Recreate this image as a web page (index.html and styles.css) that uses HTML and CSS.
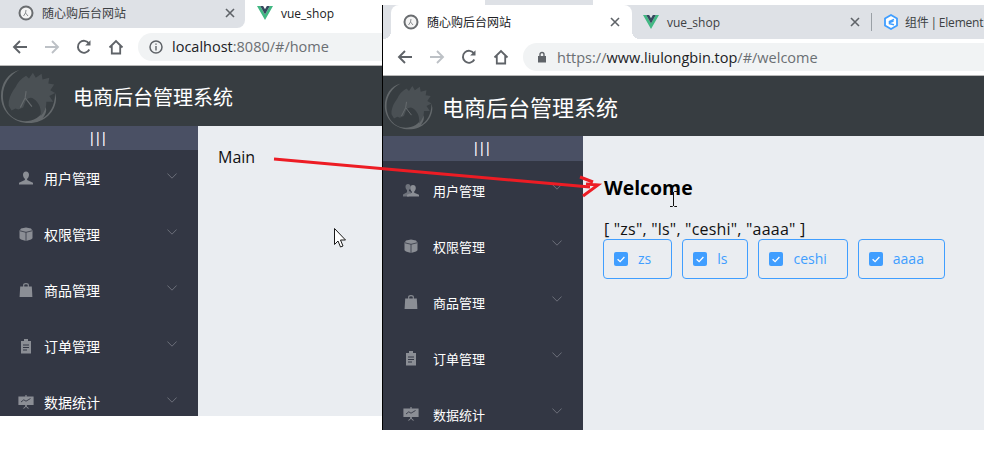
FILE: index.html
```html
<!DOCTYPE html>
<html lang="en">
<head>
    <meta charset="UTF-8">
    <meta name="viewport" content="width=device-width, initial-scale=1.0">
    <title>Welcome vs Home</title>
    <link rel="stylesheet" href="styles.css">
</head>
<body>
    <svg class="defs" width="0" height="0">
        <symbol id="i-horse" viewBox="0 0 60 60">
            <path fill="#63686b" d="M20 3C8 6 1 17 1 30c0 16 13 28 29 28 16 0 28-12 28-26l-1-5c0 14-6 22-13 26 3-4 5-8 3-12-4 11-13 15-21 15C12 56 3 44 3 30 3 18 10 8 20 3z"/>
            <path fill="#4a5054" d="M9 36c1-6 4-11 7-15 2-5 6-9 11-12l3 3 4-6 3 5 6-4 1 6 7-2-1 6 6 1-4 6 5 3-6 3 4 6-7 0c0 6-2 11-6 15 1-7-1-14-7-18-3-2-5-1-8 1l-3 8-5 2-3-1-4 2-3-5z"/>
            <path fill="none" stroke="#666b6e" stroke-width="1.200" d="M27 25l-1 7-5 10M26 32l7 9"/>
        </symbol>
        <symbol id="i-fav" viewBox="0 0 16 16">
            <circle cx="8" cy="8" r="6.5" fill="#f4f4f4" stroke="#6a6d70" stroke-width="2"/>
            <path fill="none" stroke="#8a8d90" stroke-width="1" d="M8 5l-.5 3-2 3M7.500 8l2.500 3"/>
        </symbol>
        <symbol id="i-vue" viewBox="0 0 24 21">
            <path fill="#41b883" d="M0 0l12 21L24 0h-4.800L12 12.600 4.800 0z"/>
            <path fill="#35495e" d="M4.800 0L12 12.600 19.200 0h-4.400L12 4.800 9.200 0z"/>
        </symbol>
        <symbol id="i-element" viewBox="0 0 16 16">
            <path fill="#fff" stroke="#409eff" stroke-width="1.800" d="M8 1l6 3.500v7L8 15l-6-3.500v-7z"/>
            <path fill="none" stroke="#409eff" stroke-width="1.600" d="M11 5.600L6.500 7.500v2.200l4.500 1M6.500 8.600l4-1.500"/>
        </symbol>
        <symbol id="i-x" viewBox="0 0 10 10">
            <path fill="none" stroke="#5f6368" stroke-width="1.600" d="M1 1l8 8M9 1l-8 8"/>
        </symbol>
        <symbol id="i-back" viewBox="0 0 16 16">
            <path fill="none" stroke="currentColor" stroke-width="1.900" d="M15 8H2M8 2L2 8l6 6"/>
        </symbol>
        <symbol id="i-forward" viewBox="0 0 16 16">
            <path fill="none" stroke="currentColor" stroke-width="1.900" d="M1 8h13M8 2l6 6-6 6"/>
        </symbol>
        <symbol id="i-reload" viewBox="0 0 16 16">
            <path fill="none" stroke="currentColor" stroke-width="1.900" d="M13.300 10.500A6 6 0 1 1 13 4.600"/>
            <path fill="currentColor" d="M14.500 1.200v5.300H9.200z"/>
        </symbol>
        <symbol id="i-home" viewBox="0 0 16 16">
            <path fill="none" stroke="currentColor" stroke-width="1.800" d="M1.500 8.500L8 2l6.500 6.500M3.800 7v7.500h8.400V7"/>
        </symbol>
        <symbol id="i-info" viewBox="0 0 14 14">
            <circle cx="7" cy="7" r="6" fill="none" stroke="#5f6368" stroke-width="1.500"/>
            <path fill="#5f6368" d="M6.300 3.400h1.400v1.400H6.300zM6.300 6h1.400v4.600H6.300z"/>
        </symbol>
        <symbol id="i-lock" viewBox="0 0 10 12">
            <path fill="#5f6368" d="M1 5h8v6.500H1z"/>
            <path fill="none" stroke="#5f6368" stroke-width="1.400" d="M3 5V3.500a2 2 0 0 1 4 0V5"/>
        </symbol>
        <symbol id="i-user" viewBox="0 0 16 16">
            <path fill="#8b8e95" d="M8 1.500c1.900 0 3 1.300 3 3.200 0 1.900-1 3.500-1.900 4.100v1.300l5.900 2.600V14.500H1v-1.800l5.900-2.600V8.800C6 8.200 5 6.600 5 4.700 5 2.800 6.100 1.500 8 1.500z"/>
        </symbol>
        <symbol id="i-users" viewBox="0 0 16 16">
            <path fill="#6f737c" d="M5 2c1.500 0 2.500 1.100 2.500 2.700 0 1.500-.8 2.700-1.500 3.200v1.200L8 10l-2 4.500H0v-2L4 10.300V8C3.200 7.400 2.500 6.200 2.500 4.700 2.500 3.100 3.500 2 5 2z"/>
            <path fill="#8b8e95" d="M10 3c1.700 0 2.800 1.200 2.800 3 0 1.600-.8 2.900-1.600 3.400v1.300l4.800 2.100v1.700H4v-1.700l4.800-2.100V9.400C8 8.900 7.200 7.600 7.200 6c0-1.800 1.100-3 2.800-3z"/>
        </symbol>
        <symbol id="i-box" viewBox="0 0 16 16">
            <path fill="#8b8e95" d="M8 1.500l5 1 1.500 2.200v7.600l-1.500 1.300-5 1.400-5-1.400-1.500-1.300V4.700L3 2.500z"/>
            <path fill="none" stroke="#333744" stroke-width=".8" d="M2 4.800l6 1.500 6-1.500M8 6.300V15"/>
        </symbol>
        <symbol id="i-bag" viewBox="0 0 16 16">
            <path fill="#8b8e95" d="M2.200 4.500h11.600l.6 10.500H1.600z"/>
            <path fill="none" stroke="#8b8e95" stroke-width="1.100" d="M5.700 5V3c0-.8.800-1.400 2.300-1.400s2.300.6 2.300 1.400v2"/>
        </symbol>
        <symbol id="i-clip" viewBox="0 0 16 16">
            <path fill="#8b8e95" d="M6 1h4v2h3v12.500H3V3h3z"/>
            <path fill="none" stroke="#333744" stroke-width="1" d="M5 7h6M5 9.500h6M5 12h4"/>
        </symbol>
        <symbol id="i-board" viewBox="0 0 16 16">
            <path fill="#8b8e95" d="M7.400 1h1.200v1.500h7v8.500h-6.800v1.400l2.500 2.100h-1.500L8 12.800l-1.800 1.700H4.700l2.500-2.100V11H.4V2.500h7z"/>
            <path fill="none" stroke="#333744" stroke-width=".9" d="M3 8l2.800-2.200 2.200 1.400 4.500-2.700"/>
        </symbol>
        <symbol id="i-chevron" viewBox="0 0 10 6">
            <path fill="none" stroke="#6c6f7a" stroke-width="1" d="M.4.500L5 5.200 9.600.500"/>
        </symbol>
        <symbol id="i-check" viewBox="0 0 14 14">
            <path fill="none" stroke="#fff" stroke-width="1.300" d="M3.600 7.200l2.500 2.400 4.300-4.600"/>
        </symbol>
    </svg>

    <!-- window behind: localhost -->
    <section class="window win-home">
        <div class="tabstrip">
            <div class="tab tab-back">
                <svg class="favicon"><use href="#i-fav"/></svg>
                <span class="tab-title">随心购后台网站</span>
                <svg class="tab-close"><use href="#i-x"/></svg>
            </div>
            <div class="tab tab-active">
                <svg class="favicon"><use href="#i-vue"/></svg>
                <span class="tab-title">vue_shop</span>
            </div>
        </div>
        <div class="toolbar">
            <svg class="nav-btn"><use href="#i-back"/></svg>
            <svg class="nav-btn nav-off"><use href="#i-forward"/></svg>
            <svg class="nav-btn"><use href="#i-reload"/></svg>
            <svg class="nav-btn"><use href="#i-home"/></svg>
            <div class="omnibox">
                <svg class="site-icon"><use href="#i-info"/></svg>
                <span class="url"><b>localhost</b>:8080/#/home</span>
            </div>
        </div>
        <header class="app-header">
            <svg class="logo"><use href="#i-horse"/></svg>
            <span class="app-title">电商后台管理系统</span>
        </header>
        <div class="app-body">
            <aside class="aside">
                <div class="toggle">|||</div>
                <ul class="menu">
                    <li><svg class="menu-icon"><use href="#i-user"/></svg><span>用户管理</span><svg class="chevron"><use href="#i-chevron"/></svg></li>
                    <li><svg class="menu-icon"><use href="#i-box"/></svg><span>权限管理</span><svg class="chevron"><use href="#i-chevron"/></svg></li>
                    <li><svg class="menu-icon"><use href="#i-bag"/></svg><span>商品管理</span><svg class="chevron"><use href="#i-chevron"/></svg></li>
                    <li><svg class="menu-icon"><use href="#i-clip"/></svg><span>订单管理</span><svg class="chevron"><use href="#i-chevron"/></svg></li>
                    <li><svg class="menu-icon"><use href="#i-board"/></svg><span>数据统计</span><svg class="chevron"><use href="#i-chevron"/></svg></li>
                </ul>
            </aside>
            <main class="main">Main</main>
        </div>
    </section>

    <!-- window in front: deployed site -->
    <div class="strip-peek"></div>
    <section class="window win-welcome">
        <div class="tabstrip">
            <div class="tab tab-active">
                <svg class="favicon"><use href="#i-fav"/></svg>
                <span class="tab-title">随心购后台网站</span>
                <svg class="tab-close"><use href="#i-x"/></svg>
            </div>
            <div class="tab tab-back">
                <svg class="favicon"><use href="#i-vue"/></svg>
                <span class="tab-title">vue_shop</span>
                <svg class="tab-close"><use href="#i-x"/></svg>
            </div>
            <div class="tab tab-back tab-last">
                <svg class="favicon"><use href="#i-element"/></svg>
                <span class="tab-title">组件 | Element</span>
            </div>
        </div>
        <div class="toolbar">
            <svg class="nav-btn"><use href="#i-back"/></svg>
            <svg class="nav-btn nav-off"><use href="#i-forward"/></svg>
            <svg class="nav-btn"><use href="#i-reload"/></svg>
            <svg class="nav-btn"><use href="#i-home"/></svg>
            <div class="omnibox">
                <svg class="site-icon"><use href="#i-lock"/></svg>
                <span class="url">https://<b>www.liulongbin.top</b>/#/welcome</span>
            </div>
        </div>
        <header class="app-header">
            <svg class="logo"><use href="#i-horse"/></svg>
            <span class="app-title">电商后台管理系统</span>
        </header>
        <div class="app-body">
            <aside class="aside">
                <div class="toggle">|||</div>
                <ul class="menu">
                    <li><svg class="menu-icon"><use href="#i-users"/></svg><span>用户管理</span><svg class="chevron"><use href="#i-chevron"/></svg></li>
                    <li><svg class="menu-icon"><use href="#i-box"/></svg><span>权限管理</span><svg class="chevron"><use href="#i-chevron"/></svg></li>
                    <li><svg class="menu-icon"><use href="#i-bag"/></svg><span>商品管理</span><svg class="chevron"><use href="#i-chevron"/></svg></li>
                    <li><svg class="menu-icon"><use href="#i-clip"/></svg><span>订单管理</span><svg class="chevron"><use href="#i-chevron"/></svg></li>
                    <li><svg class="menu-icon"><use href="#i-board"/></svg><span>数据统计</span><svg class="chevron"><use href="#i-chevron"/></svg></li>
                </ul>
            </aside>
            <main class="main">
                <h3 class="welcome">Welcome</h3>
                <div class="picked">[ "zs", "ls", "ceshi", "aaaa" ]</div>
                <div class="checks">
                    <label class="check"><svg class="check-box"><use href="#i-check"/></svg>zs</label>
                    <label class="check"><svg class="check-box"><use href="#i-check"/></svg>ls</label>
                    <label class="check"><svg class="check-box"><use href="#i-check"/></svg>ceshi</label>
                    <label class="check"><svg class="check-box"><use href="#i-check"/></svg>aaaa</label>
                </div>
            </main>
        </div>
    </section>

    <!-- hand drawn annotation and mouse pointers on top of the screenshot -->
    <svg class="overlay" viewBox="0 0 986 458">
        <path fill="none" stroke="#ed1c24" stroke-width="3" d="M274 159L590 187"/>
        <path fill="none" stroke="#ed1c24" stroke-width="3" d="M580 177l13 5M583 196l15-11-12-1"/>
        <path fill="#fff" stroke="#1a1a1a" stroke-width="1" d="M334.500 228.500v16l3.500-3.500 2.500 6 2.500-1-2.500-6h5z"/>
        <path fill="none" stroke="#111" stroke-width="1" d="M670 191.500h2.500l1 1 1-1h2.500M673.500 192v14M670 206.500h2.500l1-1 1 1h2.500"/>
    </svg>
</body>
</html>
```

FILE: styles.css
```css
html, body {
    margin: 0;
    padding: 0;
    height: 458px;
    overflow: hidden;
    background: #fff;
}
body {
    position: relative;
    font-family: "Open Sans", "Noto Sans CJK SC", sans-serif;
}
.defs {
    position: absolute;
}
svg {
    display: block;
    flex: none;
}

/* browser windows sit on a free canvas */
.window {
    position: absolute;
    display: flex;
    flex-direction: column;
    overflow: hidden;
    background: #fff;
}
.win-home {
    left: 0;
    top: 0;
    width: 382px;
    height: 416px;
}
.win-welcome {
    left: 382px;
    top: 5px;
    width: 601px;
    height: 425px;
    border-left: 1px solid #000;
}
.strip-peek {
    position: absolute;
    left: 485px;
    top: 0;
    width: 108px;
    height: 5px;
    background: #dee1e6;
}

/* tabs */
.tabstrip {
    display: flex;
    flex: none;
    background: #dee1e6;
    font-size: 12px;
    color: #3c4043;
}
.win-home .tabstrip {
    height: 28px;
    background: #fff;
}
.win-welcome .tabstrip {
    height: 34px;
    padding-left: 8px;
}
.tab {
    position: relative;
    display: flex;
    align-items: center;
    box-sizing: border-box;
    flex: none;
}
.tab-active {
    background: #fff;
    color: #202124;
}
.tab-title {
    flex: 1;
    white-space: nowrap;
}
.favicon {
    width: 16px;
    height: 16px;
    margin-right: 8px;
}
.tab-close {
    width: 10px;
    height: 10px;
}
.win-home .tab-back {
    width: 245px;
    padding: 0 10px 2px 18px;
    border-bottom-right-radius: 8px;
    background: #dee1e6;
}
.win-home .tab-active {
    width: 137px;
    padding: 0 0 2px 12px;
}
.win-welcome .tab-active {
    width: 241px;
    padding: 0 12px 0 12px;
    border-radius: 8px 8px 0 0;
}
/* the curved feet of the selected tab */
.win-welcome .tab-active::before,
.win-welcome .tab-active::after {
    content: "";
    position: absolute;
    bottom: 0;
    width: 8px;
    height: 8px;
}
.win-welcome .tab-active::before {
    left: -8px;
    background: radial-gradient(circle at 0 0, #dee1e6 8px, #fff 8px);
}
.win-welcome .tab-active::after {
    right: -8px;
    background: radial-gradient(circle at 100% 0, #dee1e6 8px, #fff 8px);
}
.win-welcome .tab-back {
    width: 239px;
    padding: 0 11px 0 11px;
}
.win-welcome .tab-last {
    width: 113px;
    padding: 0 0 0 12px;
    letter-spacing: -.2px;
    word-spacing: -1px;
}
.tab-last::before {
    content: "";
    position: absolute;
    left: 0;
    top: 8px;
    height: 18px;
    width: 1px;
    background: #9aa0a6;
}
.tab-last .favicon {
    margin-right: 6px;
}

/* address bar */
.toolbar {
    display: flex;
    align-items: center;
    flex: none;
    background: #fff;
    color: #5f6368;
    border-bottom: 1px solid #b9b9b9;
}
.win-home .toolbar {
    height: 37px;
    padding-left: 12px;
}
.win-welcome .toolbar {
    height: 36px;
    padding-left: 14px;
}
.nav-btn {
    width: 16px;
    height: 16px;
    margin-right: 16px;
}
.nav-off {
    color: #bdc1c6;
}
.omnibox {
    display: flex;
    align-items: center;
    flex: 1;
    height: 28px;
    border-radius: 14px 0 0 14px;
    background: #f1f3f4;
    white-space: nowrap;
}
.win-home .omnibox {
    padding-left: 11px;
    margin-left: -2px;
}
.win-welcome .omnibox {
    padding-left: 14px;
    margin-left: -2px;
}
.site-icon {
    width: 14px;
    height: 14px;
    margin-right: 9px;
}
.win-welcome .site-icon {
    width: 10px;
    height: 12px;
    margin-right: 10px;
}
.url {
    color: #6b6f73;
    font-size: 14.500px;
}
.url b {
    font-weight: 400;
    color: #202124;
}

/* vue app */
.app-header {
    display: flex;
    align-items: center;
    flex: none;
    height: 60px;
    background: #373d41;
    color: #fff;
}
.logo {
    width: 58px;
    height: 58px;
}
.app-title {
    margin-left: 15px;
    font-size: 20px;
}
.win-welcome .logo {
    width: 50px;
    height: 50px;
    margin-left: 1px;
}
.win-welcome .app-title {
    margin-left: 8px;
    font-size: 22px;
}
.app-body {
    display: flex;
    flex: 1;
    min-height: 0;
}
.aside {
    flex: none;
    width: 198px;
    background: #333744;
    overflow: hidden;
}
.win-welcome .aside {
    width: 200px;
}
.toggle {
    height: 24px;
    line-height: 24px;
    background: #4a5064;
    color: #fff;
    font-family: "Liberation Sans", sans-serif;
    font-size: 14px;
    letter-spacing: 2.400px;
    text-align: center;
}
.win-welcome .toggle {
    height: 25px;
    line-height: 25px;
}
.menu {
    list-style: none;
    margin: 0;
    padding: 0;
}
.menu li {
    display: flex;
    align-items: center;
    box-sizing: border-box;
    height: 56px;
    padding-left: 18px;
    color: #fff;
    font-size: 14px;
}
.win-welcome .menu li {
    padding-top: 2px;
    padding-left: 20px;
    font-size: 13px;
}
.menu-icon {
    width: 16px;
    height: 16px;
    margin-right: 10px;
}
.win-welcome .menu-icon {
    margin-right: 14px;
}
.chevron {
    width: 10px;
    height: 6px;
    margin-left: auto;
    margin-right: 21px;
    margin-bottom: 4px;
}
.win-welcome .chevron {
    margin-bottom: 6px;
}
.main {
    flex: 1;
    padding: 20px;
    background: #eaedf1;
    color: #111;
    font-size: 16px;
    line-height: 22px;
}
.welcome {
    margin: 20px 0 0 1px;
    font-size: 19.400px;
    line-height: 24px;
    font-weight: 700;
    color: #000;
}
.picked {
    margin: 19px 0 0 1px;
    line-height: 20px;
    letter-spacing: .2px;
    color: #111;
}
.checks {
    display: flex;
    gap: 10px;
}
.check {
    display: flex;
    align-items: center;
    box-sizing: border-box;
    height: 40px;
    padding: 0 20px 0 10px;
    border: 1px solid #409eff;
    border-radius: 4px;
    color: #409eff;
    font-size: 14px;
}
.check-box {
    width: 14px;
    height: 14px;
    margin-right: 10px;
    border-radius: 2px;
    background: #409eff;
}

.overlay {
    position: absolute;
    left: 0;
    top: 0;
    width: 986px;
    height: 458px;
    pointer-events: none;
}
```
